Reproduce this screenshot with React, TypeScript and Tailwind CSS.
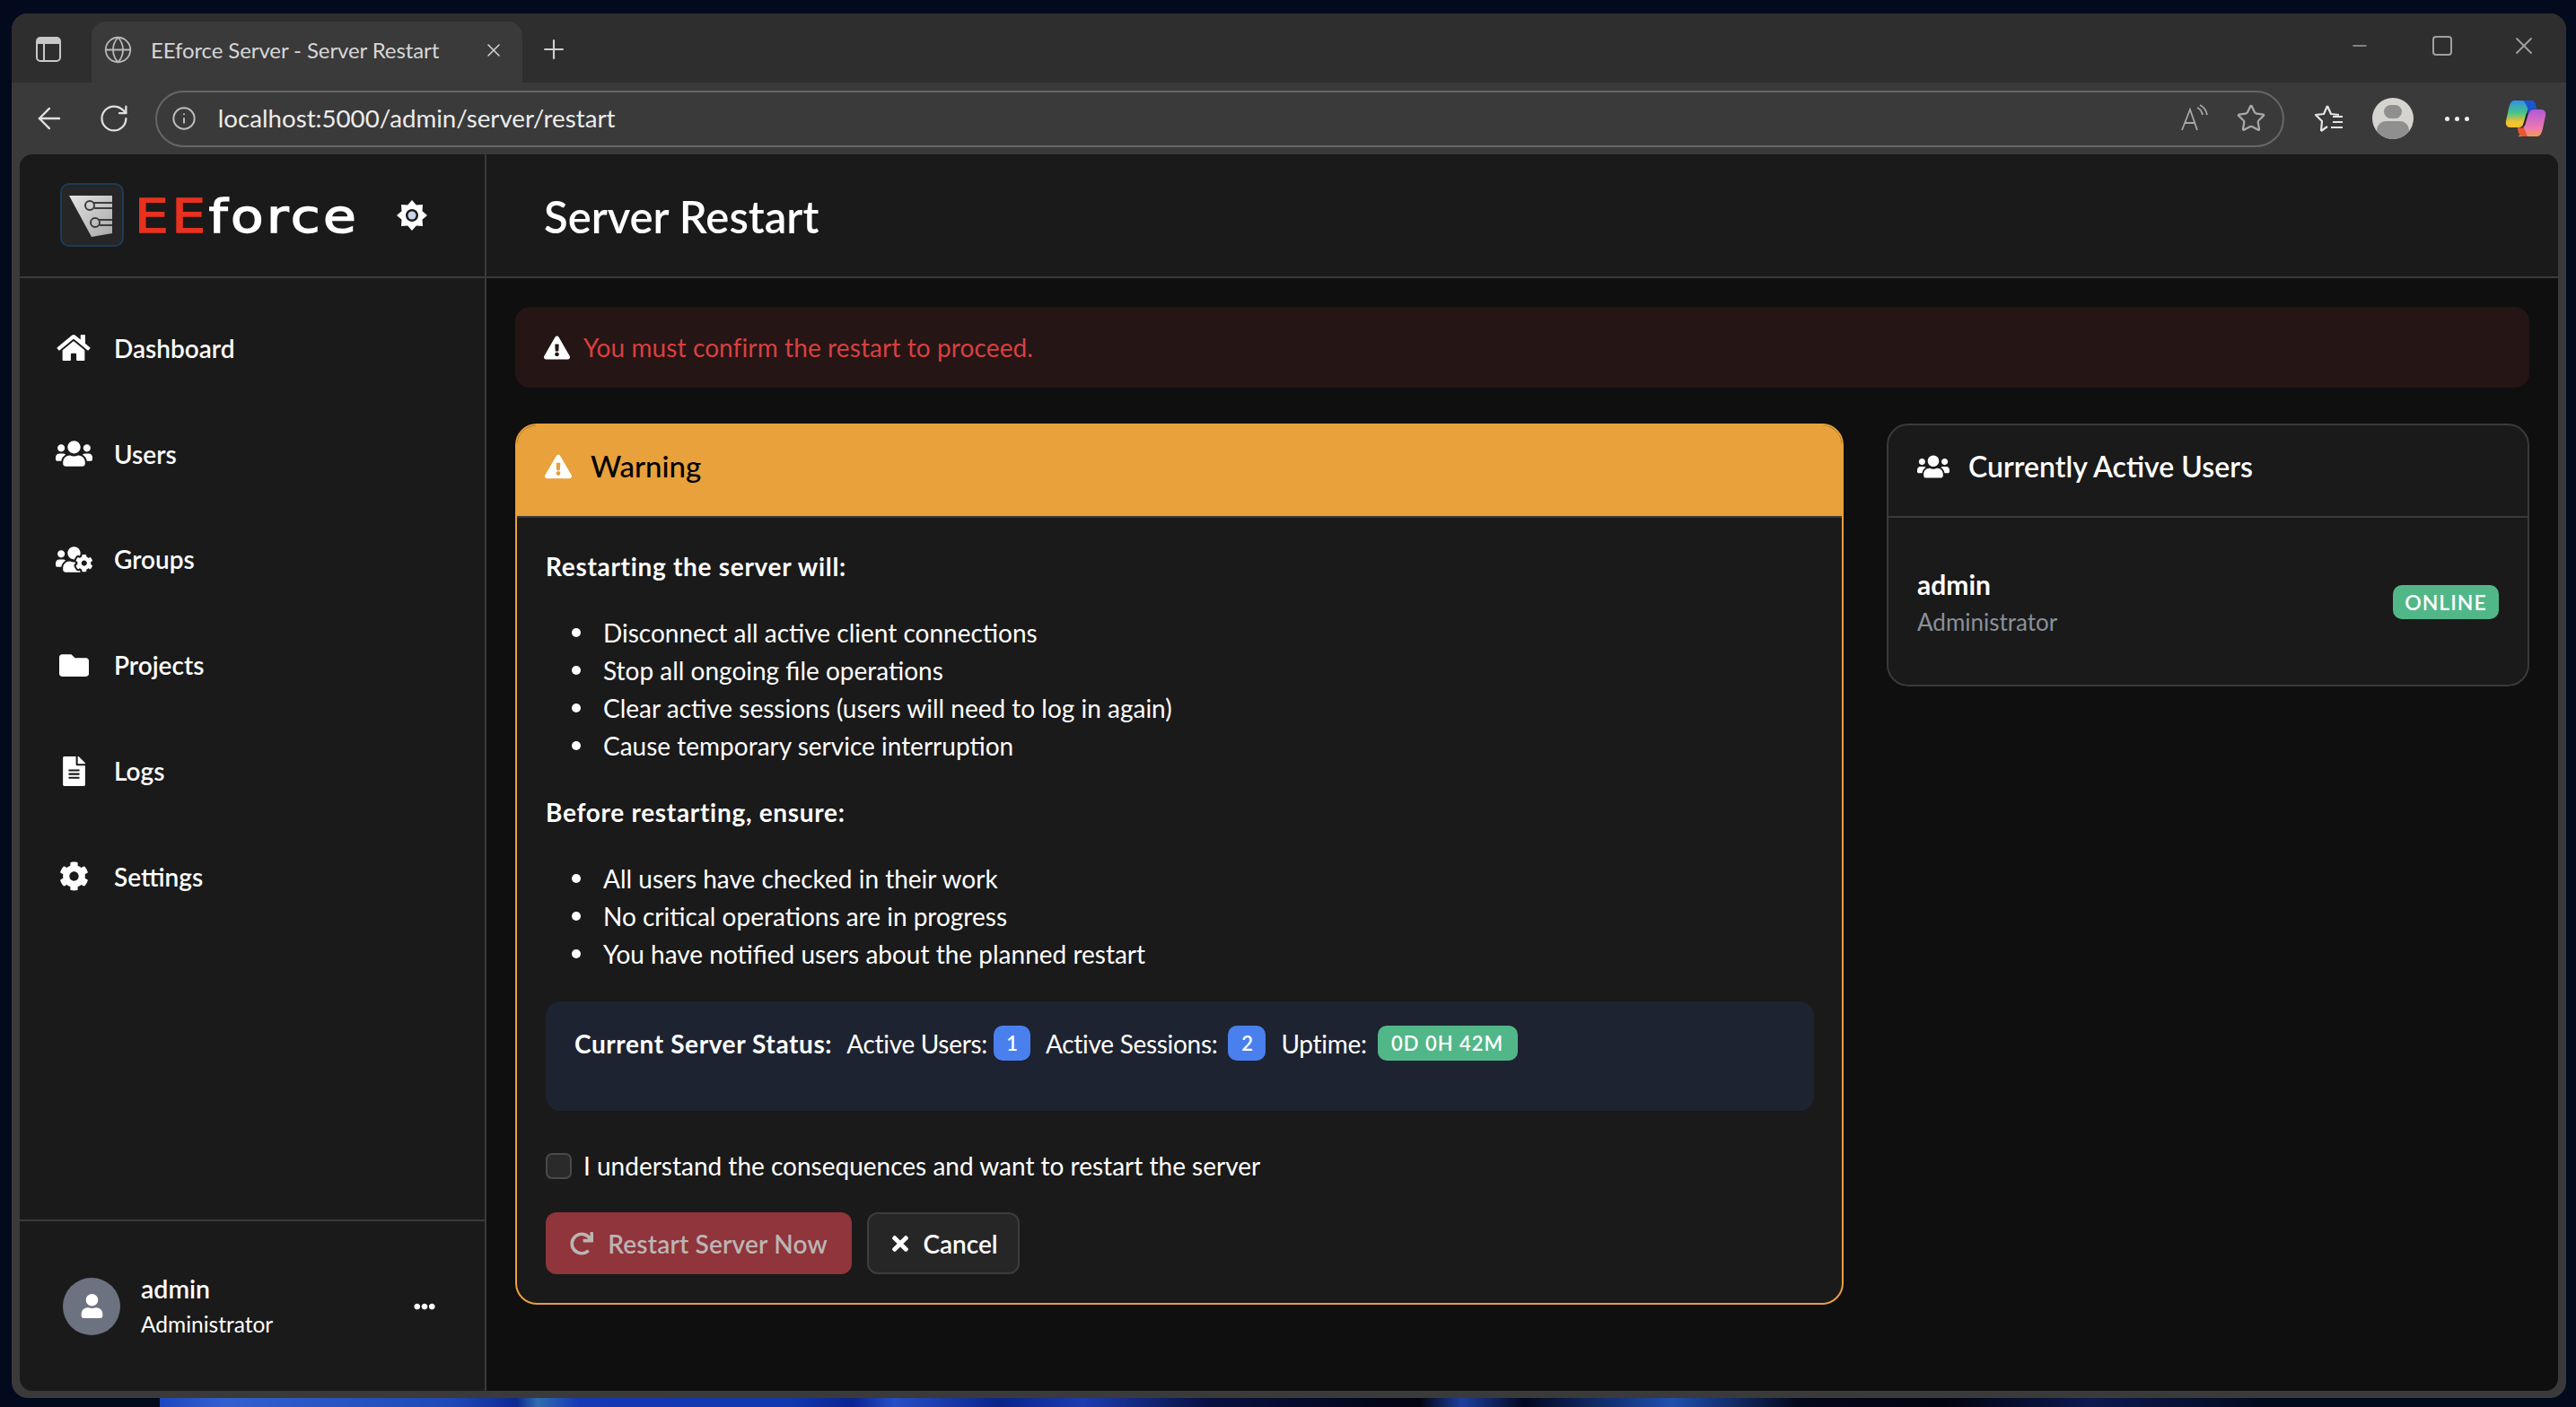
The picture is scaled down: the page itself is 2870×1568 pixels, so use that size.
import { Globe, ArrowLeft, RotateCw, Info, Star, X, Plus, Minus } from "lucide-react";
import {
  FaHome,
  FaUsers,
  FaUsersCog,
  FaFolder,
  FaFileAlt,
  FaCog,
  FaExclamationTriangle,
  FaEllipsisH,
  FaUser,
  FaRedo,
  FaTimes,
} from "react-icons/fa";

const navItems = [
  { label: "Dashboard", icon: FaHome, size: "w-[38px] h-[33px]" },
  { label: "Users", icon: FaUsers, size: "w-[41px] h-[33px]" },
  { label: "Groups", icon: FaUsersCog, size: "w-[41px] h-[33px]" },
  { label: "Projects", icon: FaFolder, size: "w-[33px] h-[33px]" },
  { label: "Logs", icon: FaFileAlt, size: "w-[25px] h-[33px]" },
  { label: "Settings", icon: FaCog, size: "w-[33px] h-[33px]" },
];

const restartEffects = [
  "Disconnect all active client connections",
  "Stop all ongoing file operations",
  "Clear active sessions (users will need to log in again)",
  "Cause temporary service interruption",
];

const beforeRestart = [
  "All users have checked in their work",
  "No critical operations are in progress",
  "You have notified users about the planned restart",
];

function LogoMark() {
  return (
    <div className="w-[71px] h-[71px] rounded-[10px] border-2 border-[#1d3a57] bg-[#262626] shrink-0">
      <svg viewBox="0 0 67 67" className="w-full h-full">
        <defs>
          <linearGradient id="shield" x1="0" y1="0" x2="1" y2="1">
            <stop offset="0" stopColor="#e4e4e4" />
            <stop offset="1" stopColor="#a8a8a8" />
          </linearGradient>
        </defs>
        <polygon points="8,12 56,12 56,54 33,58" fill="url(#shield)" />
        <g fill="none" stroke="#3c3c3c" strokeWidth="2">
          <circle cx="31" cy="23" r="5" />
          <circle cx="37" cy="42" r="5" />
          <path d="M35 20h21M36 26h20M41 39h15M42 45h14" />
        </g>
      </svg>
    </div>
  );
}

function SunGear() {
  return (
    <svg viewBox="0 0 34 34" className="w-[34px] h-[34px]">
      <path
        fillRule="evenodd"
        fill="#fff"
        d="M17 0L21.8 5.5 29 5 28.5 12.2 34 17 28.5 21.8 29 29 21.8 28.5 17 34 12.2 28.5 5 29 5.5 21.8 0 17 5.5 12.2 5 5 12.2 5.5zM17 10a7 7 0 1 0 .01 0z"
      />
      <circle cx="17" cy="17" r="4.5" fill="#c9d4e8" />
    </svg>
  );
}

function ReadAloud() {
  return (
    <svg viewBox="0 0 32 32" className="w-[32px] h-[32px]" fill="none" stroke="#a8a8a8" strokeWidth="1.8">
      <path d="M2 29L11 6l8 23M5 21h12" />
      <path d="M19 4c3 1 5 4 6 8M22 1c4 2 7 6 8 11" />
    </svg>
  );
}

function FavoritesIcon() {
  return (
    <svg viewBox="0 0 34 34" className="w-[34px] h-[34px]" fill="none" stroke="#e6e6e6" strokeWidth="2.2" strokeLinejoin="round">
      <path d="M15 3l4 9 9 1M8 31l7-5M15 3l-4 9-9 1 7 7-1 11" />
      <path d="M21 15h11M21 21h11M19 27h13" />
    </svg>
  );
}

function Copilot() {
  return (
    <svg viewBox="0 0 46 46" className="w-[46px] h-[46px]">
      <defs>
        <linearGradient id="cpa" x1="0" y1="0" x2="0" y2="1">
          <stop offset="0" stopColor="#2f8fe8" />
          <stop offset="0.45" stopColor="#46c48a" />
          <stop offset="0.8" stopColor="#f2c230" />
        </linearGradient>
        <linearGradient id="cpb" x1="0" y1="0" x2="0" y2="1">
          <stop offset="0" stopColor="#b158d8" />
          <stop offset="0.7" stopColor="#ee7ab0" />
          <stop offset="1" stopColor="#f59a50" />
        </linearGradient>
      </defs>
      <path d="M36 43H14c4-1 5-5 7-11l5-16c1-2 3-3 5-3h9c4 0 6 3 5 7l-3 14c-1 5-3 9-6 9z" fill="url(#cpb)" />
      <path d="M10 3h22c-4 1-5 5-7 11l-5 16c-1 2-3 3-5 3H6c-4 0-6-3-5-7l3-14c1-5 3-9 6-9z" fill="url(#cpa)" />
      <path d="M14 33l7 1 4 9h-5c-4 0-6-4-6-10z" fill="#e8552f" />
      <path d="M20 3h9c3 0 6 3 6 10l-5-1-4 6c0-5-2-11-6-15z" fill="#1d55d0" />
      <path d="M25 17l-4 14" stroke="#20242c" strokeWidth="2" />
    </svg>
  );
}

function BrowserChrome() {
  return (
    <>
      <div className="h-[77px] flex items-end bg-[#2e2e2e] rounded-t-[18px]">
        <div className="w-[89px] h-[68px] flex items-center pl-[27px] pb-[6px]">
          <div className="w-[28px] h-[28px] rounded-[5px] border-2 border-[#c8c8c8] flex flex-col">
            <div className="h-[6px] border-b-2 border-[#c8c8c8] bg-[#c8c8c8]" />
            <div className="flex-1 w-[8px] border-r-2 border-[#c8c8c8]" />
          </div>
        </div>
        <div className="w-[480px] h-[68px] bg-[#3a3a3a] rounded-t-[16px] flex items-center pl-[13px] pr-[20px] pb-[5px] text-[24px] text-[#d6d6d6]">
          <Globe className="w-[33px] h-[33px] text-[#b8b8b8]" strokeWidth={1.3} />
          <span className="ml-[20px] flex-1 tracking-[-0.1px]">EEforce Server - Server Restart</span>
          <X className="w-[24px] h-[24px] text-[#d0d0d0]" strokeWidth={1.6} />
        </div>
        <div className="h-[68px] flex items-center pl-[18px] pb-[6px]">
          <Plus className="w-[34px] h-[34px] text-[#d0d0d0]" strokeWidth={1.5} />
        </div>
        <div className="flex-1" />
        <div className="h-[77px] flex items-center pr-[31px] pb-[6px] text-[#a0a0a0]">
          <Minus className="w-[24px] h-[24px]" strokeWidth={1.5} />
          <div className="ml-[69px] w-[22px] h-[22px] rounded-[4px] border-2 border-[#a0a0a0]" />
          <X className="ml-[64px] w-[32px] h-[32px]" strokeWidth={1.4} />
        </div>
      </div>
      <div className="h-[80px] flex items-center bg-[#3a3a3a] pl-[23px] pr-[22px]">
        <ArrowLeft className="w-[38px] h-[38px] text-[#e0e0e0]" strokeWidth={1.5} />
        <RotateCw className="w-[36px] h-[36px] ml-[35px] text-[#e0e0e0]" strokeWidth={1.5} />
        <div className="ml-[28px] w-[2380px] h-[63px] rounded-full border-2 border-[#666666] flex items-center pl-[16px] pr-[18px]">
          <Info className="w-[28px] h-[28px] text-[#bdbdbd]" strokeWidth={1.7} />
          <span className="ml-[24px] flex-1 text-[27.7px] text-[#ececec]">localhost:5000/admin/server/restart</span>
          <ReadAloud />
          <Star className="w-[34px] h-[34px] ml-[30px] text-[#a8a8a8]" strokeWidth={1.6} />
        </div>
        <div className="ml-[33px]">
          <FavoritesIcon />
        </div>
        <div className="ml-[31px] w-[46px] h-[46px] rounded-full bg-[#d6d4d0] relative overflow-hidden flex flex-col items-center shrink-0">
          <div className="mt-[8px] w-[20px] h-[20px] rounded-full bg-[#8f8f8f]" />
          <div className="mt-[3px] w-[36px] h-[26px] rounded-full bg-[#8f8f8f]" />
        </div>
        <div className="ml-[35px] flex gap-[6px]">
          <span className="w-[5px] h-[5px] rounded-full bg-[#eeeeee]" />
          <span className="w-[5px] h-[5px] rounded-full bg-[#eeeeee]" />
          <span className="w-[5px] h-[5px] rounded-full bg-[#eeeeee]" />
        </div>
        <div className="ml-[40px]">
          <Copilot />
        </div>
      </div>
    </>
  );
}

function Sidebar() {
  return (
    <aside className="w-[520px] shrink-0 bg-[#1a1a1a] border-r-2 border-[#3a3a3a] flex flex-col">
      <div className="h-[138px] border-b-2 border-[#3a3a3a] flex items-start pl-[45px] pt-[32px] shrink-0">
        <LogoMark />
        <div className="ml-[12px] h-[71px] pt-[3px] flex items-center origin-left scale-x-[1.15] text-[52px] font-['DejaVu_Sans',sans-serif] text-white [-webkit-text-stroke:1.4px_currentColor]">
          <span className="text-[#e8321f] tracking-[3px]">EE</span>
          <span className="tracking-[3px]">force</span>
        </div>
        <div className="ml-[74px] h-[71px] flex items-center">
          <SunGear />
        </div>
      </div>
      <nav className="flex-1 pt-[19px]">
        {navItems.map((item) => (
          <div key={item.label} className="h-[117.8px] flex items-center text-[28px] font-semibold text-white">
            <div className="w-[105px] flex justify-center pl-[15px]">
              <item.icon className={item.size} />
            </div>
            <span>{item.label}</span>
          </div>
        ))}
      </nav>
      <div className="h-[191px] border-t-2 border-[#3a3a3a] flex items-center pl-[48px] pr-[55px] text-white shrink-0">
        <div className="w-[64px] h-[64px] rounded-full bg-[#6c7280] flex items-center justify-center">
          <FaUser className="text-[27px]" />
        </div>
        <div className="ml-[23px] flex-1">
          <div className="text-[28.5px] font-semibold leading-[40px]">admin</div>
          <div className="text-[24.5px] leading-[38px] pt-[1px]">Administrator</div>
        </div>
        <FaEllipsisH className="text-[24px]" />
      </div>
    </aside>
  );
}

function Bullets({ lines }: { lines: string[] }) {
  return (
    <ul className="mt-[32px]">
      {lines.map((line) => (
        <li key={line} className="flex items-center pl-[29px]">
          <span className="w-[10px] h-[10px] rounded-full bg-white shrink-0" />
          <span className="ml-[25px]">{line}</span>
        </li>
      ))}
    </ul>
  );
}

function WarningCard() {
  return (
    <section className="flex-1 rounded-[24px] border-2 border-[#e8a13b] bg-[#1a1a1a] overflow-hidden">
      <div className="h-[103px] bg-[#e8a13b] border-b-2 border-[#3a3a3a] flex items-center pl-[31px] pb-[10px] text-black text-[33px] font-medium">
        <FaExclamationTriangle className="text-[30px] text-white" />
        <span className="ml-[21px]">Warning</span>
      </div>
      <div className="pl-[32px] pr-[31px] pt-[33px] pb-[32px] text-[28px] leading-[42px] text-white">
        <p className="font-bold tracking-[0.7px]">Restarting the server will:</p>
        <Bullets lines={restartEffects} />
        <p className="font-bold tracking-[0.7px] mt-[32px]">Before restarting, ensure:</p>
        <Bullets lines={beforeRestart} />
        <div className="mt-[32px] h-[122px] rounded-[16px] bg-[#1d2330] pl-[32px] pt-[27px] flex items-start">
          <div className="flex items-center h-[39px] gap-[7px] tracking-[-0.3px]">
            <b className="mr-[9px] tracking-[0.6px]">Current Server Status:</b>
            <span>Active Users:</span>
            <span className="w-[41px] h-[39px] rounded-[10px] bg-[#4a7fee] flex items-center justify-center text-[22px] font-semibold">1</span>
            <span className="ml-[10px]">Active Sessions:</span>
            <span className="ml-[5px] w-[42px] h-[39px] rounded-[10px] bg-[#4a7fee] flex items-center justify-center text-[22px] font-semibold">2</span>
            <span className="ml-[10px]">Uptime:</span>
            <span className="ml-[5px] w-[156px] h-[39px] rounded-[10px] bg-[#52b788] flex items-center justify-center text-[22px] font-semibold tracking-[1px]">0D 0H 42M</span>
          </div>
        </div>
        <label className="mt-[46px] flex items-center h-[30px]">
          <span className="w-[29px] h-[29px] rounded-[7px] border-2 border-[#4a4a4a] bg-[#2a2a2a] shrink-0" />
          <span className="ml-[13px]">I understand the consequences and want to restart the server</span>
        </label>
        <div className="mt-[37px] flex gap-[17px]">
          <button className="w-[341px] h-[69px] rounded-[12px] bg-[#8f353b] text-[#bcb4b4] font-semibold tracking-[0.2px] flex items-center justify-center gap-[16px]">
            <FaRedo className="text-[26px]" />
            Restart Server Now
          </button>
          <button className="w-[170px] h-[69px] rounded-[12px] bg-[#262626] border-2 border-[#3d3d3d] text-white font-semibold flex items-center justify-center gap-[12px]">
            <FaTimes className="text-[26px]" />
            Cancel
          </button>
        </div>
      </div>
    </section>
  );
}

function ActiveUsersCard() {
  return (
    <section className="w-[716px] h-[293px] shrink-0 rounded-[24px] border-2 border-[#3a3a3a] bg-[#1a1a1a]">
      <div className="h-[103px] border-b-2 border-[#3a3a3a] flex items-center pl-[32px] pb-[10px] text-white text-[32px] font-semibold">
        <FaUsers className="text-[36px]" />
        <span className="ml-[21px]">Currently Active Users</span>
      </div>
      <div className="h-[188px] flex items-center justify-between pl-[32px] pr-[32px]">
        <div className="pt-[3px]">
          <div className="text-[30px] font-bold leading-[40px] text-white">admin</div>
          <div className="text-[26px] leading-[44px] text-[#8b9099]">Administrator</div>
        </div>
        <span className="w-[118px] h-[38px] rounded-[10px] bg-[#52b788] flex items-center justify-center text-[23px] font-semibold tracking-[1px] text-white">ONLINE</span>
      </div>
    </section>
  );
}

function App() {
  return (
    <div className="w-[2870px] h-[1568px] overflow-hidden bg-[#030a1e] flex flex-col font-['Lato','Noto_Sans',sans-serif]">
      <div className="ml-[13px] mr-[11px] mt-[15px] h-[1543px] shrink-0 rounded-[18px] bg-[#3a3a3a] flex flex-col">
        <BrowserChrome />
        <div className="flex-1 mx-[9px] mb-[8px] rounded-[14px] overflow-hidden flex min-h-0">
          <Sidebar />
          <main className="flex-1 bg-[#0f0f0f] flex flex-col min-w-0">
            <header className="h-[138px] bg-[#1a1a1a] border-b-2 border-[#3a3a3a] flex items-center pl-[64px] pt-[4px] text-white text-[49px] font-semibold shrink-0">
              Server Restart
            </header>
            <div className="pt-[32px] pl-[32px] pr-[32px]">
              <div className="h-[90px] rounded-[16px] bg-[#251515] flex items-center pl-[32px] text-[28px] text-[#d9403f]">
                <FaExclamationTriangle className="text-[29px] text-white" />
                <span className="ml-[15px] tracking-[0.1px]">You must confirm the restart to proceed.</span>
              </div>
              <div className="mt-[40px] flex items-start gap-[48px]">
                <WarningCard />
                <ActiveUsersCard />
              </div>
            </div>
          </main>
        </div>
      </div>
      <div className="h-[10px] ml-[178px] mr-[353px] bg-[linear-gradient(to_right,#1d46c0_0%,#3260d0_3%,#1e48b8_14%,#0c2a90_17%,#2f6cb0_18%,#1538b5_20%,#1038b0_30%,#0a2490_33%,#2650c8_35%,#0a2488_40%,#1c3cb0_44%,#081040_50%,#020410_60%,#1c3fa0_62%,#020820_65%,#1f4fb0_72%,#04081c_78%,#020410_85%,#0c1a50_92%,#030a1e_100%)]" />
    </div>
  );
}

export default App;
